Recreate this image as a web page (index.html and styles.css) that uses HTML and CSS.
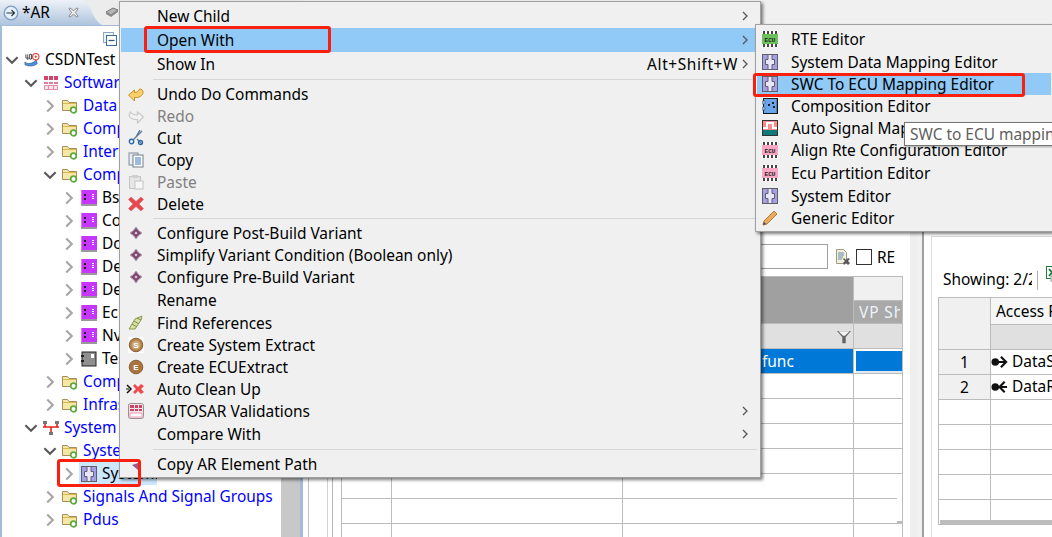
FILE: index.html
```html
<!DOCTYPE html>
<html lang="en">
<head>
<meta charset="utf-8">
<title>AR</title>
<link rel="stylesheet" href="styles.css">
</head>
<body>
<svg class="defs" width="0" height="0">
  <defs>
    <symbol id="chev-r" viewBox="0 0 10 10"><path d="M3 1l4 4-4 4" fill="none" stroke="#a6a6a6" stroke-width="1.5"/></symbol>
    <symbol id="chev-d" viewBox="0 0 10 10"><path d="M1 3l4 4 4-4" fill="none" stroke="#595959" stroke-width="1.5"/></symbol>
    <symbol id="arrow" viewBox="0 0 10 10"><path d="M3 1l4 4-4 4" fill="none" stroke="#555" stroke-width="1.3"/></symbol>
    <symbol id="project" viewBox="0 0 17 16"><path d="M1 10c3 3 8 2 12-2l1 4c-4 3-9 3-13 1z" fill="#4d8fd8" stroke="#2b5a96" stroke-width=".7"/><path d="M2 2v4h3M4 2v6M6 2h2v5H6z" fill="none" stroke="#333" stroke-width=".9"/><circle cx="12.5" cy="4.5" r="3.4" fill="#fff" stroke="#e0453c" stroke-width="1.2"/><circle cx="12.5" cy="4.5" r="1.2" fill="#e0453c"/></symbol>
    <symbol id="swgrid" viewBox="0 0 16 16"><path d="M1 1h4v4H1zM6 1h4v4H6zM11 1h4v4h-4z" fill="#d1456d"/><path d="M1 7h4v2H1zM6 7h4v2H6zM11 7h4v2h-4z" fill="#e27c9b"/><path d="M1.500 10.500h13v4h-13zM5.500 11v3M10.500 11v3" fill="#fbe4ec" stroke="#e38aa6"/></symbol>
    <symbol id="folder" viewBox="0 0 16 16"><path d="M.5 2.500h5l1.500 2h7.500v8H.5z" fill="#f7e7a6" stroke="#a48f5a"/><path d="M1 5.500h13" stroke="#d9b84f"/><circle cx="11.500" cy="12" r="2.800" fill="#fff" stroke="#5dab3e" stroke-width="1.700"/></symbol>
    <symbol id="comp" viewBox="0 0 16 16"><rect width="16" height="16" fill="#f06fe8"/><rect x="1" y="0" width="15" height="14" fill="#c736ff"/><path d="M0 14h16v2H0z" fill="#9a9a9a"/><path d="M3 4h2v2H3zM3 8h2v2H3z" fill="#222"/><path d="M11 4h2v1h-2zM11 6h2v1h-2zM11 8h2v1h-2z" fill="#fff"/></symbol>
    <symbol id="tcomp" viewBox="0 0 16 16"><rect x="1" y="1" width="14" height="14" fill="#8f8f8f" stroke="#222"/><rect x="10" y="3" width="3" height="4" fill="#fff"/><path d="M0 4h3v2H0zM0 9h3v2H0z" fill="#222"/></symbol>
    <symbol id="sysnet" viewBox="0 0 16 16"><path d="M0 1h4v3H0zM12 1h4v3h-4zM6 12h4v3H6z" fill="#777"/><path d="M2 4v3h12V4M8 7v5M0 7h16" fill="none" stroke="#e32222" stroke-width="1.600"/></symbol>
    <symbol id="sysh" viewBox="0 0 16 16"><rect x=".5" y=".5" width="15" height="15" fill="#a79fe6" stroke="#5f5f6a"/><path d="M6 .5v5H3.500v5H6v5h4v-5h2.500v-5H10v-5z" fill="#e9e6fa" stroke="#5f5f6a"/></symbol>
    <symbol id="undo" viewBox="0 0 16 16"><path d="M.5 9l6-5v2.500c2 0 4-1 5-3.500 2 0 3.500 1 3.500 3 0 4-4 6-8.500 5.500V15z" fill="#f8cf6a" stroke="#c98f22"/></symbol>
    <symbol id="redo" viewBox="0 0 16 16"><path d="M15.500 9l-6-5v3c-3 0-6-1-7-3L1 7c0 3 4 5 8.500 4.500V15z" fill="#f2f2f2" stroke="#c9c9c9" stroke-width="1.200"/></symbol>
    <symbol id="cut" viewBox="0 0 16 16"><path d="M14 1L5 10M9 9l5 5M12 0L8 7" fill="none" stroke="#5d7a99" stroke-width="1.400"/><circle cx="3.500" cy="11.500" r="2.200" fill="none" stroke="#2f6aa8" stroke-width="1.400"/><circle cx="12.500" cy="12.500" r="2" fill="none" stroke="#2f6aa8" stroke-width="1.400"/></symbol>
    <symbol id="copy" viewBox="0 0 16 16"><rect x="1" y="1" width="9" height="12" fill="#e8edf2" stroke="#7f8c99"/><rect x="5" y="3" width="10" height="12" fill="#fff" stroke="#6f7f8f"/><path d="M7 6h6M7 8h6M7 10h6M7 12h6" stroke="#3a78b8"/></symbol>
    <symbol id="paste" viewBox="0 0 16 16"><rect x="1.500" y="2.500" width="11" height="12" fill="#e6e6e6" stroke="#c4c4c4"/><rect x="4" y="1" width="6" height="3" fill="#d0d0d0"/><rect x="7" y="7" width="8" height="8" fill="#f7f7f7" stroke="#c4c4c4"/></symbol>
    <symbol id="del" viewBox="0 0 16 16"><path d="M3 1l5 4.500L13 1l2.500 2.500L11 8l4.500 4.500L13 15l-5-4.500L3 15 .5 12.500 5 8 .5 3.500z" fill="#e8474f" stroke="#cf5a5f" stroke-width=".5"/></symbol>
    <symbol id="variant" viewBox="0 0 16 16"><path d="M8 2l2.500 3.500L14 8l-3.500 2.500L8 14l-2.500-3.500L2 8l3.500-2.500z" fill="#84476f" stroke="#a9a3b5"/><circle cx="8" cy="8" r="1.300" fill="#d7c5d6"/></symbol>
    <symbol id="refs" viewBox="0 0 16 16"><path d="M1 14L7 4l7-3-1 4-6 9z" fill="#dbe0a8" stroke="#8a9a4e"/><path d="M4 9l5 3M6 6l5 3M9 3l4 2" stroke="#7a8c3e"/></symbol>
    <symbol id="badge-s" viewBox="0 0 16 16"><rect width="16" height="16" fill="#fff"/><circle cx="8" cy="8" r="6.800" fill="#b07f48" stroke="#8c5f31"/><circle cx="8" cy="8" r="4.600" fill="#c9a677"/><text x="8" y="11" class="badge-text">S</text></symbol>
    <symbol id="badge-e" viewBox="0 0 16 16"><circle cx="8" cy="8" r="6.800" fill="#a8743f" stroke="#8c5f31"/><text x="8" y="11.200" class="badge-text">E</text></symbol>
    <symbol id="clean" viewBox="0 0 20 16"><path d="M1 4l4 4-4 4" fill="none" stroke="#111" stroke-width="1.500"/><path d="M0 8h3" stroke="#111"/><path d="M9 3l3 3 3-3 3 2-3 3 3 3-3 2-3-3-3 3-2-2 3-3-3-3z" fill="#ee4a52"/></symbol>
    <symbol id="valid" viewBox="0 0 16 16"><rect x=".5" y=".5" width="15" height="15" rx="2" fill="#f5e3e8" stroke="#9a8f93"/><path d="M2 2h4v3H2zM7 2h3v3H7zM11 2h3v3h-3zM2 6h4v2H2zM7 6h3v2H7zM11 6h3v2h-3z" fill="#cf4569"/><path d="M2 10h12v4H2z" fill="#fff" stroke="#e38aa6" stroke-width=".8"/></symbol>
    <symbol id="ecu-g" viewBox="0 0 16 16"><rect width="16" height="16" fill="#fff"/><rect y="3" width="16" height="10" fill="#6cc05c"/><path d="M1 0h2v3H1zM5 0h2v3H5zM9 0h2v3H9zM13 0h2v3h-2zM1 13h2v3H1zM5 13h2v3H5zM9 13h2v3H9zM13 13h2v3h-2z" fill="#444"/><text x="8" y="10.500" class="chip-text">ECU</text></symbol>
    <symbol id="ecu-p" viewBox="0 0 16 16"><rect width="16" height="16" fill="#fff"/><rect y="3" width="16" height="10" fill="#f9a6c4"/><path d="M1 0h2v3H1zM5 0h2v3H5zM9 0h2v3H9zM13 0h2v3h-2zM1 13h2v3H1zM5 13h2v3H5zM9 13h2v3H9zM13 13h2v3h-2z" fill="#444"/><text x="8" y="10.500" class="chip-text">ECU</text></symbol>
    <symbol id="compo" viewBox="0 0 16 16"><rect x="1.500" y=".5" width="14" height="15" fill="#6aa4ea" stroke="#222"/><path d="M15.500 1v15H2" fill="none" stroke="#111" stroke-width="1.500"/><path d="M0 3h3v3H0zM0 9h3v3H0z" fill="#8db8ea" stroke="#555" stroke-width=".5"/><path d="M6 6h2v2H6zM10 4h2v2h-2zM11 8h2v2h-2z" fill="#222"/></symbol>
    <symbol id="signal" viewBox="0 0 16 16"><rect x=".5" y=".5" width="15" height="15" fill="#f98d8d" stroke="#333"/><rect x="1" y="10" width="14" height="5" fill="#0f7a7a"/><path d="M1 8h4V3h6v5h4" fill="none" stroke="#fff" stroke-width="2"/></symbol>
    <symbol id="pencil" viewBox="0 0 16 16"><path d="M12 1l3 3L5 14l-4 1 1-4z" fill="#eaa95c" stroke="#b87a35"/><path d="M1 15l1-3 2 2z" fill="#2f3f86"/></symbol>
    <symbol id="clear" viewBox="0 0 16 16"><path d="M1.500.5h7l3 3v11h-10z" fill="#f5efd9" stroke="#9a9a86"/><path d="M3 4h6M3 6h6M3 8h5M3 10h4" stroke="#5f87b5"/><path d="M9 9l2 2 2-2 2 1-2 2 2 2-2 2-2-2-2 2-1-2 2-2-2-2z" fill="#555"/></symbol>
    <symbol id="funnel" viewBox="0 0 16 16"><path d="M0 1h16L10 8v7H6V8z" fill="#666"/><path d="M1.500 1.500h13L9 6.500H7z" fill="#f4f4f4"/></symbol>
    <symbol id="excel" viewBox="0 0 16 16"><rect x=".5" y=".5" width="12" height="12" fill="#fff" stroke="#1d7a3a"/><path d="M3 3l6 7M9 3l-6 7" stroke="#1d7a3a" stroke-width="1.800"/><rect x="5" y="10" width="10" height="5" fill="#fff" stroke="#999"/></symbol>
    <symbol id="out" viewBox="0 0 18 14"><circle cx="4.500" cy="7" r="4" fill="#111"/><path d="M5 7h11M10.500 1.500L16 7l-5.500 5.500" fill="none" stroke="#111" stroke-width="2.300"/></symbol>
    <symbol id="in" viewBox="0 0 18 14"><circle cx="4.500" cy="7" r="4" fill="#111"/><path d="M5 7h12M14.500 1.500L9 7l5.500 5.500" fill="none" stroke="#111" stroke-width="2.300"/></symbol>
  </defs>
</svg>

<div class="app">
  <section class="left">
    <header class="tabbar">
      <div class="tab">
        <svg class="tab-ico" viewBox="0 0 16 16"><circle cx="8" cy="8" r="6.800" fill="#e6f0fa" stroke="#7d9cc4" stroke-width="1.300"/><path d="M3.500 8h8M8.500 5l3 3-3 3" fill="none" stroke="#233" stroke-width="1.100"/></svg>
        <span class="tab-name">*AR</span>
        <svg class="tab-close" viewBox="0 0 12 12"><path d="M2 1l4 3 4-3 1 1-3 4 3 4-1 1-4-3-4 3-1-1 3-4-3-4z" fill="#f5f5f5" stroke="#7d7d7d"/></svg>
      </div>
      <svg class="tab-curve" viewBox="0 0 20 25" preserveAspectRatio="none"><path d="M0 0c8 0 10 20 20 25H0z" fill="url(#tg)"/><defs><linearGradient id="tg" x1="0" y1="0" x2="0" y2="1"><stop offset="0" stop-color="#eef2f8"/><stop offset="1" stop-color="#aec4de"/></linearGradient></defs></svg>
      <div class="tab-other">
        <svg class="tab-cube" viewBox="0 0 14 12"><path d="M1 6l7-4 5 2-7 5z" fill="#b5b5b5" stroke="#777"/><path d="M1 6v2l5 3 7-5V4L6 9z" fill="#8a8a8a"/></svg>
      </div>
    </header>
    <div class="treebar">
      <svg class="collapse" viewBox="0 0 14 14"><rect x=".5" y=".5" width="10" height="10" fill="#eef3f8" stroke="#8fa6bf"/><rect x="3.500" y="3.500" width="10" height="10" fill="#fff" stroke="#3f6b9a"/><path d="M5.500 8.500h6" stroke="#2c5585" stroke-width="1.300"/></svg>
    </div>
    <div class="treewrap">
      <ul class="tree">
        <li class="node l0 black"><svg class="chev"><use href="#chev-d"/></svg><svg class="ico"><use href="#project"/></svg><span>CSDNTest</span></li>
        <li class="node l1"><svg class="chev"><use href="#chev-d"/></svg><svg class="ico"><use href="#swgrid"/></svg><span>Software</span></li>
        <li class="node l2"><svg class="chev"><use href="#chev-r"/></svg><svg class="ico"><use href="#folder"/></svg><span>Data Types</span></li>
        <li class="node l2"><svg class="chev"><use href="#chev-r"/></svg><svg class="ico"><use href="#folder"/></svg><span>Compu Methods</span></li>
        <li class="node l2"><svg class="chev"><use href="#chev-r"/></svg><svg class="ico"><use href="#folder"/></svg><span>Interfaces</span></li>
        <li class="node l2"><svg class="chev"><use href="#chev-d"/></svg><svg class="ico"><use href="#folder"/></svg><span>Components</span></li>
        <li class="node l3 black"><svg class="chev"><use href="#chev-r"/></svg><svg class="ico"><use href="#comp"/></svg><span>BswM</span></li>
        <li class="node l3 black"><svg class="chev"><use href="#chev-r"/></svg><svg class="ico"><use href="#comp"/></svg><span>ComM</span></li>
        <li class="node l3 black"><svg class="chev"><use href="#chev-r"/></svg><svg class="ico"><use href="#comp"/></svg><span>Dcm</span></li>
        <li class="node l3 black"><svg class="chev"><use href="#chev-r"/></svg><svg class="ico"><use href="#comp"/></svg><span>Dem</span></li>
        <li class="node l3 black"><svg class="chev"><use href="#chev-r"/></svg><svg class="ico"><use href="#comp"/></svg><span>Det</span></li>
        <li class="node l3 black"><svg class="chev"><use href="#chev-r"/></svg><svg class="ico"><use href="#comp"/></svg><span>EcuM</span></li>
        <li class="node l3 black"><svg class="chev"><use href="#chev-r"/></svg><svg class="ico"><use href="#comp"/></svg><span>NvM</span></li>
        <li class="node l3 black"><svg class="chev"><use href="#chev-r"/></svg><svg class="ico"><use href="#tcomp"/></svg><span>Test</span></li>
        <li class="node l2"><svg class="chev"><use href="#chev-r"/></svg><svg class="ico"><use href="#folder"/></svg><span>Compositions</span></li>
        <li class="node l2"><svg class="chev"><use href="#chev-r"/></svg><svg class="ico"><use href="#folder"/></svg><span>Infrastructure</span></li>
        <li class="node l1"><svg class="chev"><use href="#chev-d"/></svg><svg class="ico"><use href="#sysnet"/></svg><span>System</span></li>
        <li class="node l2"><svg class="chev"><use href="#chev-d"/></svg><svg class="ico"><use href="#folder"/></svg><span>Systems</span></li>
        <li class="node l3 black"><svg class="chev"><use href="#chev-r"/></svg><div class="selected"><svg class="ico"><use href="#sysh"/></svg><span>SystemDesc</span></div></li>
        <li class="node l2"><svg class="chev"><use href="#chev-r"/></svg><svg class="ico"><use href="#folder"/></svg><span>Signals And Signal Groups</span></li>
        <li class="node l2"><svg class="chev"><use href="#chev-r"/></svg><svg class="ico"><use href="#folder"/></svg><span>Pdus</span></li>
      </ul>
      <div class="treescroll"></div>
    </div>
  </section>

  <section class="center">
    <div class="frame-a"><div class="frame-b"><div class="frame-c">
      <div class="filterbar">
        <input class="search" type="text" aria-label="Filter">
        <svg class="clear"><use href="#clear"/></svg>
        <span class="check"></span>
        <span class="re">RE</span>
      </div>
      <div class="tablewrap">
        <table class="grid main">
          <colgroup><col class="c-num"><col class="c-wide"><col class="c-wide"><col class="c-vp"></colgroup>
          <tr class="h1"><th class="gray-h" rowspan="2" colspan="3"></th><th class="vp-top"></th></tr>
          <tr class="h2"><th class="vp-h"><span class="vp-clip">VP Shared</span></th></tr>
          <tr class="filter"><td></td><td></td><td class="fcell"><svg class="funnel"><use href="#funnel"/></svg></td><td></td></tr>
          <tr class="sel"><td></td><td></td><td class="func">func</td><td class="vpcell"></td></tr>
          <tr><td></td><td></td><td></td><td></td></tr>
          <tr><td></td><td></td><td></td><td></td></tr>
          <tr><td></td><td></td><td></td><td></td></tr>
          <tr><td></td><td></td><td></td><td></td></tr>
          <tr><td></td><td></td><td></td><td></td></tr>
          <tr><td></td><td></td><td></td><td></td></tr>
          <tr><td></td><td></td><td></td><td></td></tr>
        </table>
        <div class="vtrack"></div>
      </div>
    </div></div></div>
  </section>

  <section class="right">
    <div class="right-inner">
      <div class="showbar">
        <span class="showing">Showing: 2/2</span>
        <span class="vsep"></span>
        <svg class="excel"><use href="#excel"/></svg>
      </div>
      <table class="grid side">
        <colgroup><col class="s-num"><col class="s-wide"></colgroup>
        <tr class="h-side"><th class="corner" rowspan="2"></th><th class="access">Access Points</th></tr>
        <tr class="filter"><td></td></tr>
        <tr><td class="num">1</td><td><div class="access-cell"><svg class="dir"><use href="#out"/></svg><span>DataSendPoint</span></div></td></tr>
        <tr><td class="num">2</td><td><div class="access-cell"><svg class="dir"><use href="#in"/></svg><span>DataReceivePoint</span></div></td></tr>
        <tr><td class="num-blank"></td><td></td></tr>
        <tr><td class="num-blank"></td><td></td></tr>
        <tr><td class="num-blank"></td><td></td></tr>
        <tr><td class="num-blank"></td><td></td></tr>
        <tr><td class="num-blank"></td><td></td></tr>
      </table>
      <div class="hthumb"></div>
    </div>
  </section>
</div>

<nav class="menu main-menu">
  <div class="mi tall"><span class="mi-ico"></span><span class="mi-label">New Child</span><svg class="mi-arrow"><use href="#arrow"/></svg></div>
  <div class="mi tall hot"><span class="mi-ico"></span><span class="mi-label">Open With</span><svg class="mi-arrow"><use href="#arrow"/></svg></div>
  <div class="mi tall"><span class="mi-ico"></span><span class="mi-label">Show In</span><span class="mi-key">Alt+Shift+W</span><svg class="mi-arrow"><use href="#arrow"/></svg></div>
  <div class="msep"></div>
  <div class="mi"><svg class="mi-ico"><use href="#undo"/></svg><span class="mi-label">Undo Do Commands</span></div>
  <div class="mi off"><svg class="mi-ico"><use href="#redo"/></svg><span class="mi-label">Redo</span></div>
  <div class="mi"><svg class="mi-ico"><use href="#cut"/></svg><span class="mi-label">Cut</span></div>
  <div class="mi"><svg class="mi-ico"><use href="#copy"/></svg><span class="mi-label">Copy</span></div>
  <div class="mi off"><svg class="mi-ico"><use href="#paste"/></svg><span class="mi-label">Paste</span></div>
  <div class="mi"><svg class="mi-ico"><use href="#del"/></svg><span class="mi-label">Delete</span></div>
  <div class="msep"></div>
  <div class="mi"><svg class="mi-ico"><use href="#variant"/></svg><span class="mi-label">Configure Post-Build Variant</span></div>
  <div class="mi"><svg class="mi-ico"><use href="#variant"/></svg><span class="mi-label">Simplify Variant Condition (Boolean only)</span></div>
  <div class="mi"><svg class="mi-ico"><use href="#variant"/></svg><span class="mi-label">Configure Pre-Build Variant</span></div>
  <div class="mi tall"><span class="mi-ico"></span><span class="mi-label">Rename</span></div>
  <div class="mi"><svg class="mi-ico"><use href="#refs"/></svg><span class="mi-label">Find References</span></div>
  <div class="mi"><svg class="mi-ico"><use href="#badge-s"/></svg><span class="mi-label">Create System Extract</span></div>
  <div class="mi"><svg class="mi-ico"><use href="#badge-e"/></svg><span class="mi-label">Create ECUExtract</span></div>
  <div class="mi"><svg class="mi-ico wide"><use href="#clean"/></svg><span class="mi-label">Auto Clean Up</span></div>
  <div class="mi"><svg class="mi-ico"><use href="#valid"/></svg><span class="mi-label">AUTOSAR Validations</span><svg class="mi-arrow"><use href="#arrow"/></svg></div>
  <div class="mi tall"><span class="mi-ico"></span><span class="mi-label">Compare With</span><svg class="mi-arrow"><use href="#arrow"/></svg></div>
  <div class="msep"></div>
  <div class="mi"><span class="mi-ico"></span><span class="mi-label">Copy AR Element Path</span></div>
</nav>

<nav class="menu sub-menu">
  <div class="mi tall"><svg class="mi-ico"><use href="#ecu-g"/></svg><span class="mi-label">RTE Editor</span></div>
  <div class="mi"><svg class="mi-ico"><use href="#sysh"/></svg><span class="mi-label">System Data Mapping Editor</span></div>
  <div class="mi hot"><svg class="mi-ico"><use href="#sysh"/></svg><span class="mi-label">SWC To ECU Mapping Editor</span></div>
  <div class="mi"><svg class="mi-ico"><use href="#compo"/></svg><span class="mi-label">Composition Editor</span></div>
  <div class="mi"><svg class="mi-ico"><use href="#signal"/></svg><span class="mi-label">Auto Signal Mapping Editor</span></div>
  <div class="mi"><svg class="mi-ico"><use href="#ecu-p"/></svg><span class="mi-label">Align Rte Configuration Editor</span></div>
  <div class="mi tall"><svg class="mi-ico"><use href="#ecu-p"/></svg><span class="mi-label">Ecu Partition Editor</span></div>
  <div class="mi"><svg class="mi-ico"><use href="#sysh"/></svg><span class="mi-label">System Editor</span></div>
  <div class="mi"><svg class="mi-ico"><use href="#pencil"/></svg><span class="mi-label">Generic Editor</span></div>
</nav>

<div class="tooltip">SWC to ECU mapping</div>
<div class="mark mark-open"></div>
<div class="mark mark-swc"></div>
<div class="mark mark-sys"></div>
<svg class="cursor-tip" viewBox="0 0 8 8"><path d="M1 2l6-2v7z" fill="#a0578e"/></svg>
</body>
</html>
```

FILE: styles.css
```css
* { box-sizing: border-box; }
html, body { margin: 0; padding: 0; }
body {
  width: 1052px;
  height: 537px;
  overflow: hidden;
  position: relative;
  background: #f0f0f0;
  font-family: "Noto Sans", "Open Sans", sans-serif;
  font-size: 15.45px;
  color: #000;
}
.defs { position: absolute; }
.badge-text { font: bold 8px "Liberation Sans", sans-serif; fill: #fff; text-anchor: middle; }
.chip-text { font: bold 6px "Liberation Mono", monospace; fill: #222; text-anchor: middle; }

.app { display: flex; height: 537px; }

/* left tree pane */
.left {
  width: 303px;
  flex: none;
  display: flex;
  flex-direction: column;
  background: #fff;
  border-left: 2px solid #a3bcd9;
  border-right: 3px solid #a3bcd9;
}
.tabbar {
  height: 26px;
  flex: none;
  display: flex;
  margin: 0 -3px 0 -2px;
  background: #ececec;
  border-bottom: 1px solid #a3bcd9;
}
.tab {
  width: 82px;
  display: flex;
  align-items: center;
  padding-left: 3px;
  background: linear-gradient(#eef2f8, #aec4de);
}
.tab-ico { width: 16px; height: 16px; margin-right: 3px; }
.tab-name { width: 46px; margin-top: -2px; }
.tab-close { width: 11px; height: 11px; }
.tab-curve { width: 20px; height: 25px; flex: none; }
.tab-other { padding: 6px 0 0 3px; flex: 1; }
.tab-cube { width: 14px; height: 12px; display: block; }
.treebar { height: 22px; flex: none; display: flex; justify-content: flex-end; padding: 6px 183px 0 0; }
.collapse { width: 14px; height: 14px; }
.treewrap { flex: 1; display: flex; min-height: 0; overflow: hidden; }
.tree { flex: none; width: 279px; margin: 0; padding: 0; list-style: none; color: #0000ff; }
.treescroll { flex: 1; background: #c8c8c8; }
.node {
  height: 23px;
  display: flex;
  align-items: center;
  white-space: nowrap;
}
.node span { margin-top: -2px; }
.node.black { color: #000; }
.l0 { padding-left: 3px; }
.l1 { padding-left: 22px; }
.l2 { padding-left: 41px; }
.l3 { padding-left: 60px; }
.chev { width: 14px; height: 14px; flex: none; margin-right: 5px; }
.ico { width: 16px; height: 16px; flex: none; margin-right: 5px; }
.selected {
  display: flex;
  align-items: center;
  height: 23px;
  width: 78px;
  margin-left: -2px;
  padding-left: 2px;
  background: #cce8ff;
  overflow: hidden;
}

/* center editor */
.center { width: 614px; flex: none; height: 512px; margin-top: 25px; padding-left: 4px; background: #fff; border-right: 7px solid #eeeeee; }
.frame-a { height: 512px; border-left: 1px solid #c4c4c4; padding-left: 18px; margin-left: 1px; }
.frame-b { height: 512px; border-left: 1px solid #d0d0d0; padding-left: 4px; }
.frame-c { height: 512px; border-left: 1px solid #b5b5b5; padding: 219px 0 0 0; }
.filterbar { height: 32px; display: flex; align-items: flex-start; margin-left: 8px; }
.search { width: 487px; height: 25px; margin: 0 7px 0 0; border: 1px solid #a0a0a0; background: #fff; flex: none; }
.clear { width: 16px; height: 16px; margin: 5px 5px 0 0; flex: none; }
.check { width: 16px; height: 16px; margin: 5px 5px 0 0; border: 1px solid #333; background: #fff; flex: none; }
.re { line-height: 26px; }
.tablewrap { position: relative; width: 562px; margin-left: 8px; }
.grid { border-collapse: collapse; table-layout: fixed; background: #fff; }
.grid td, .grid th { border: 1px solid #bcbcbc; padding: 0; font-weight: 400; overflow: hidden; white-space: nowrap; }
.grid tr { height: 25px; }
.main { width: 561px; }
.c-num { width: 50px; }
.c-wide { width: 231px; }
.c-vp { width: 49px; }
.h1 { height: 24px !important; }
.h2 { height: 23px !important; }
.gray-h { background: #a0a0a0; }
.vp-top { background: #f0f0f0; }
.vp-h { background: #a9a9a9; color: #edf3fa; text-align: left; padding-left: 5px !important; }
.vp-clip { display: block; width: 41px; overflow: hidden; letter-spacing: .9px; }
.grid .filter td { background: #e0e0e0; }
.funnel { width: 16px; height: 14px; display: block; margin: 1px 1px 0 auto; }
.grid .sel td { background: #0078d7; color: #fff; border-bottom: 1px dotted #000; }
.grid .sel .func { padding-left: 139px; }
.grid .sel .vpcell { box-shadow: inset 2px 2px 0 #fff, inset 0 -2px 0 #dfe9f2; }
.vtrack { position: absolute; right: 1px; top: 200px; width: 5px; height: 48px; background: #fff; border-bottom: 3px solid #bcbcbc; }

/* right editor */
.right { flex: 1; min-width: 0; height: 512px; margin: 25px 0 0 5px; padding: 0 0 0 7px; background: #fff; border-left: 2px solid #9f9f9f; overflow: hidden; }
.right-inner { margin-top: 211px; height: 301px; border-left: 1px solid #dcdcdc; border-top: 1px solid #dcdcdc; padding: 33px 0 0 6px; position: relative; }
.showbar { height: 27px; display: flex; align-items: flex-start; padding-left: 5px; }
.showing { width: 89px; flex: none; overflow: hidden; white-space: nowrap; line-height: 19px; }
.vsep { width: 1px; height: 19px; margin: 1px 8px 0 5px; background: #b0b0b0; flex: none; }
.excel { width: 16px; height: 16px; flex: none; margin-top: -4px; }
.side { width: 260px; }
.s-num { width: 52px; }
.s-wide { width: 208px; }
.h-side { height: 27px !important; }
.corner, .num { background: #f0f0f0; }
.num { text-align: center; }
.num-blank { background: #fff; }
.access { background: #f6f6f6; text-align: left; padding-left: 5px !important; }
.access-cell { display: flex; align-items: center; }
.access-cell span { margin-top: -2px; }
.dir { width: 17px; height: 14px; margin-right: 4px; flex: none; }
.hthumb { position: absolute; left: 8px; top: 283px; width: 120px; height: 4px; background: #bdbdbd; }

/* menus, over everything */
.menu {
  position: absolute;
  background: #f0f0f0;
  border: 1px solid #a0a0a0;
  padding: 2px 1px;
  box-shadow: 2px 2px 3px rgba(0, 0, 0, .5);
}
.main-menu { left: 119px; top: 1px; width: 642px; }
.sub-menu { left: 755px; top: 24px; width: 297px; border-right: 0; }
.mi { height: 22px; display: flex; align-items: center; padding-left: 7px; white-space: nowrap; }
.mi.tall { height: 24px; }
.mi.hot { background: #91c9f7; }
.mi.off { color: #808080; }
.mi-ico { width: 16px; height: 16px; flex: none; margin-right: 13px; }
.mi-ico.wide { width: 20px; margin: 0 11px 0 -2px; }
.sub-menu .mi { padding-left: 5px; }
.mi-label { flex: 1; }
.mi-key { margin-right: 2px; letter-spacing: .6px; }
.mi-arrow { width: 10px; height: 10px; flex: none; margin-right: 9px; }
.msep { height: 1px; margin: 3px 2px 3px 32px; background: #d7d7d7; }

.tooltip {
  position: absolute;
  left: 904px;
  top: 122px;
  width: 160px;
  height: 24px;
  padding-left: 5px;
  line-height: 23px;
  white-space: nowrap;
  color: #606060;
  background: #fff;
  border: 1px solid #767676;
  box-shadow: 1px 1px 2px rgba(0, 0, 0, .3);
}
.mark { position: absolute; border: 3px solid #f9200f; border-radius: 3px; }
.mark-open { left: 144px; top: 26px; width: 187px; height: 27px; }
.mark-swc { left: 753px; top: 73px; width: 272px; height: 24px; }
.mark-sys { left: 57px; top: 459px; width: 84px; height: 28px; }
.cursor-tip { position: absolute; left: 131px; top: 463px; width: 8px; height: 8px; }
```
